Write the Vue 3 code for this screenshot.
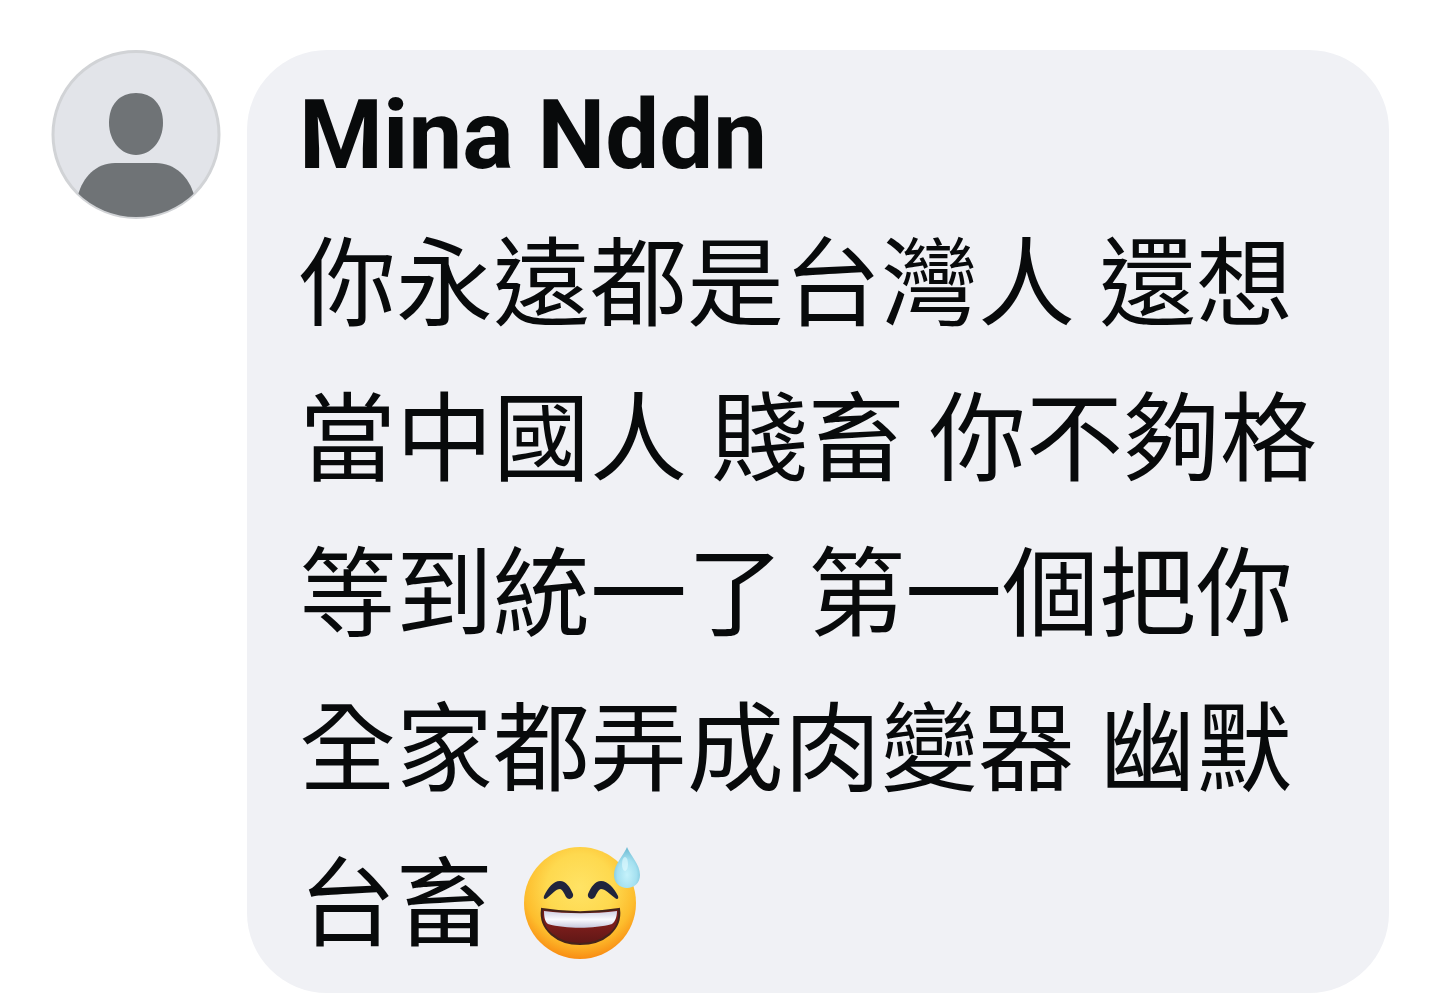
<script setup>
const author = 'Mina Nddn'
const lines = [
  '你永遠都是台灣人 還想',
  '當中國人 賤畜 你不夠格',
  '等到統一了 第一個把你',
  '全家都弄成肉變器 幽默',
]
const lastLine = '台畜 '
</script>

<template>
  <article class="comment">
    <svg class="avatar" viewBox="0 0 170 170" aria-hidden="true">
      <defs>
        <clipPath id="avatar-clip"><circle cx="85" cy="84" r="83" /></clipPath>
      </defs>
      <circle cx="85" cy="84.5" r="83" fill="#e2e4e9" stroke="#d1d3d6" stroke-width="3" />
      <g clip-path="url(#avatar-clip)" fill="#6f7376">
        <path d="M85 43C101 43 112 54 112 73C112 91 100 105 85 105C70 105 58 91 58 73C58 54 69 43 85 43Z" />
        <path d="M64 113H105C124 113 138 127 143 145V175H27V145C32 127 45 113 64 113Z" />
      </g>
    </svg>

    <div class="bubble">
      <h1 class="author">{{ author }}</h1>
      <p class="text" lang="zh-Hant">
        <template v-for="line in lines" :key="line">{{ line }}<br /></template>{{ lastLine }}<svg
          class="emoji" viewBox="0 0 118 116" role="img" aria-label="😅">
          <defs>
            <radialGradient id="face" cx="0.5" cy="0.36" r="0.66">
              <stop offset="0" stop-color="#ffe365" />
              <stop offset="0.45" stop-color="#fed94f" />
              <stop offset="0.75" stop-color="#fdbd2d" />
              <stop offset="1" stop-color="#f8860f" />
            </radialGradient>
            <linearGradient id="teeth" x1="0" y1="0" x2="0" y2="1">
              <stop offset="0" stop-color="#cfcfe2" />
              <stop offset="0.5" stop-color="#fafaff" />
              <stop offset="1" stop-color="#c6c7dc" />
            </linearGradient>
            <linearGradient id="mouth" x1="0" y1="0" x2="0" y2="1">
              <stop offset="0.5" stop-color="#7a1d1b" />
              <stop offset="1" stop-color="#5f1716" />
            </linearGradient>
            <radialGradient id="drop" cx="0.5" cy="0.68" r="0.62">
              <stop offset="0" stop-color="#c5f2fb" />
              <stop offset="0.6" stop-color="#a4e0f0" />
              <stop offset="1" stop-color="#74bfd6" />
            </radialGradient>
          </defs>
          <circle cx="56" cy="56" r="56" fill="url(#face)" />
          <g fill="#20243d">
            <path d="M20 49C24 41 29 34 36 34C42 34 46 40 49 47C50 51 45 54 42 50C40 46 38 42 36 42C32 42 28 47 23 51C21 53 19 52 20 49Z" />
            <path d="M94 49C90 41 84 34 77 34C71 34 67 40 64 47C63 51 68 54 71 50C73 46 75 42 77 42C81 42 86 47 91 51C93 53 95 52 94 49Z" />
          </g>
          <path d="M18 62C42 66 70 66 95 62C98 83 79 97 56 97C34 97 15 83 18 62Z" fill="url(#mouth)" stroke="#46231b" stroke-width="2" />
          <path d="M20 64C43 67 70 67 93 64C93 70 91 75 88 77C70 82 42 82 24 77C21 75 20 70 20 64Z" fill="url(#teeth)" />
          <path d="M103 0C106 8 116 17 116 28C116 36 110 41 103 41C96 41 90 36 90 28C90 17 100 8 103 0Z" fill="url(#drop)" />
          <ellipse cx="101" cy="17" rx="3" ry="7" fill="#e5fbff" opacity="0.6" />
        </svg>
      </p>
    </div>
  </article>
</template>

<style>
body {
  background: #fff;
}
</style>

<style scoped>
.comment {
  display: flex;
  align-items: flex-start;
  gap: 26px;
  padding: 50px 51px 3px;
  color: #080a0b;
  font-family: Roboto, "Noto Sans CJK TC", sans-serif;
}

.avatar {
  flex: none;
  width: 170px;
  height: 170px;
}

.bubble {
  flex: 1;
  min-width: 0;
  box-sizing: border-box;
  padding: 29px 52px 10px;
  border-radius: 80px;
  background: #f0f1f5;
}

.author {
  margin: 0;
  font-size: 96px;
  font-weight: 700;
  line-height: 112px;
}

.text {
  margin: 17px 0 0;
  font-size: 97px;
  font-weight: 400;
  line-height: 155px;
}

.emoji {
  width: 118px;
  height: 116px;
  margin-left: 7px;
  vertical-align: -25px;
}
</style>
